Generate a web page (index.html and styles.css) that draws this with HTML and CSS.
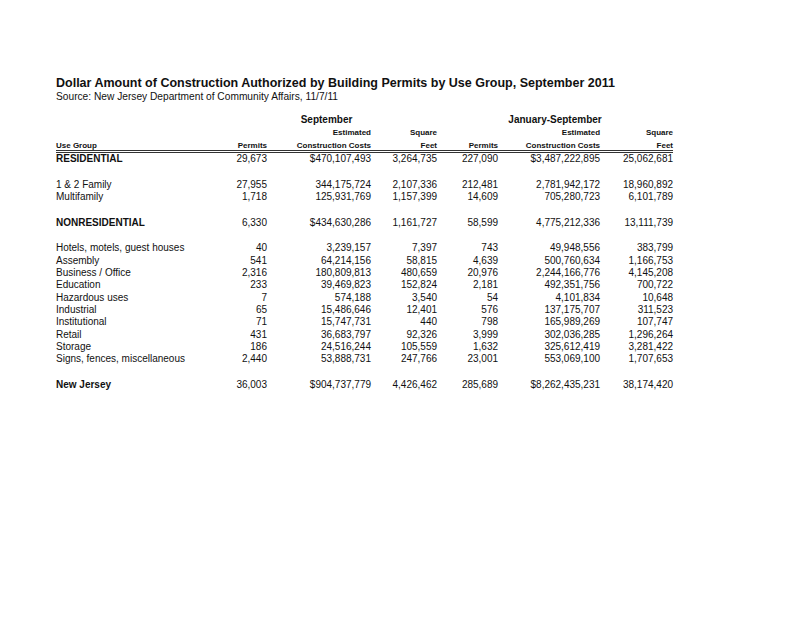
FILE: index.html
```html
<!DOCTYPE html>
<html>
<head>
<meta charset="utf-8">
<link rel="stylesheet" href="styles.css">
</head>
<body>
<div class="page">
  <h1 class="title">Dollar Amount of Construction Authorized by Building Permits by Use Group, September 2011</h1>
  <p class="source">Source: New Jersey Department of Community Affairs, 11/7/11</p>
  <table class="data">
    <colgroup>
      <col class="c1"><col class="c2"><col class="c3"><col class="c4"><col class="c5"><col class="c6"><col class="c7">
    </colgroup>
    <thead>
      <tr class="period">
        <th></th>
        <th colspan="3" class="center">September</th>
        <th colspan="3" class="center">January-September</th>
      </tr>
      <tr class="h1">
        <th></th><th></th><th>Estimated</th><th>Square</th><th></th><th>Estimated</th><th>Square</th>
      </tr>
      <tr class="h2">
        <th class="left">Use Group</th><th>Permits</th><th>Construction Costs</th><th>Feet</th><th>Permits</th><th>Construction Costs</th><th>Feet</th>
      </tr>
    </thead>
    <tbody>
      <tr class="group first"><td>RESIDENTIAL</td><td>29,673</td><td>$470,107,493</td><td>3,264,735</td><td>227,090</td><td>$3,487,222,895</td><td>25,062,681</td></tr>
      <tr class="gap big"><td colspan="7"></td></tr>
      <tr><td>1 &amp; 2 Family</td><td>27,955</td><td>344,175,724</td><td>2,107,336</td><td>212,481</td><td>2,781,942,172</td><td>18,960,892</td></tr>
      <tr><td>Multifamily</td><td>1,718</td><td>125,931,769</td><td>1,157,399</td><td>14,609</td><td>705,280,723</td><td>6,101,789</td></tr>
      <tr class="gap"><td colspan="7"></td></tr>
      <tr class="group"><td>NONRESIDENTIAL</td><td>6,330</td><td>$434,630,286</td><td>1,161,727</td><td>58,599</td><td>4,775,212,336</td><td>13,111,739</td></tr>
      <tr class="gap"><td colspan="7"></td></tr>
      <tr><td>Hotels, motels, guest houses</td><td>40</td><td>3,239,157</td><td>7,397</td><td>743</td><td>49,948,556</td><td>383,799</td></tr>
      <tr><td>Assembly</td><td>541</td><td>64,214,156</td><td>58,815</td><td>4,639</td><td>500,760,634</td><td>1,166,753</td></tr>
      <tr><td>Business / Office</td><td>2,316</td><td>180,809,813</td><td>480,659</td><td>20,976</td><td>2,244,166,776</td><td>4,145,208</td></tr>
      <tr><td>Education</td><td>233</td><td>39,469,823</td><td>152,824</td><td>2,181</td><td>492,351,756</td><td>700,722</td></tr>
      <tr><td>Hazardous uses</td><td>7</td><td>574,188</td><td>3,540</td><td>54</td><td>4,101,834</td><td>10,648</td></tr>
      <tr><td>Industrial</td><td>65</td><td>15,486,646</td><td>12,401</td><td>576</td><td>137,175,707</td><td>311,523</td></tr>
      <tr><td>Institutional</td><td>71</td><td>15,747,731</td><td>440</td><td>798</td><td>165,989,269</td><td>107,747</td></tr>
      <tr><td>Retail</td><td>431</td><td>36,683,797</td><td>92,326</td><td>3,999</td><td>302,036,285</td><td>1,296,264</td></tr>
      <tr><td>Storage</td><td>186</td><td>24,516,244</td><td>105,559</td><td>1,632</td><td>325,612,419</td><td>3,281,422</td></tr>
      <tr><td>Signs, fences, miscellaneous</td><td>2,440</td><td>53,888,731</td><td>247,766</td><td>23,001</td><td>553,069,100</td><td>1,707,653</td></tr>
      <tr class="gap"><td colspan="7"></td></tr>
      <tr class="group"><td>New Jersey</td><td>36,003</td><td>$904,737,779</td><td>4,426,462</td><td>285,689</td><td>$8,262,435,231</td><td>38,174,420</td></tr>
    </tbody>
  </table>
</div>
</body>
</html>
```

FILE: styles.css
```css
html, body {
  margin: 0;
  padding: 0;
  background: #fff;
}
body {
  font-family: "Liberation Sans", Arial, sans-serif;
  color: #111;
}
.page {
  padding: 75px 0 0 56px;
}
.title {
  margin: 0;
  font-size: 12.5px;
  line-height: 16px;
  font-weight: bold;
}
.source {
  margin: 0;
  font-size: 10.2px;
  line-height: 11px;
}
.data {
  margin-top: 12px;
  border-collapse: collapse;
  table-layout: fixed;
  width: 617px;
}
.c1 { width: 160px; }
.c2 { width: 51px; }
.c3 { width: 104px; }
.c4 { width: 66px; }
.c5 { width: 61px; }
.c6 { width: 102px; }
.c7 { width: 73px; }
.data th, .data td {
  padding: 0;
  text-align: right;
  white-space: nowrap;
}
.data th {
  font-weight: bold;
}
.data th.left, .data td:first-child {
  text-align: left;
}
.data th.center {
  text-align: center;
}
.period th {
  font-size: 10px;
  line-height: 12px;
  padding-bottom: 2px;
}
.h1 th {
  font-size: 8px;
  line-height: 10px;
  padding-bottom: 4px;
}
.h2 th {
  font-size: 8px;
  line-height: 8px;
  border-bottom: 3px double #333;
}
.data td {
  font-size: 10px;
  line-height: 12.3px;
}
.group td:first-child {
  font-weight: bold;
}
.first td {
  line-height: 11px;
}
.gap td {
  height: 13.3px;
}
.gap.big td {
  height: 15px;
}
```
